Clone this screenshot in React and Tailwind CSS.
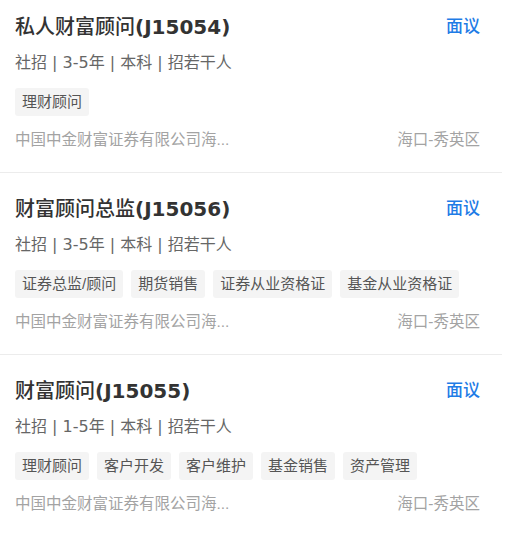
import React from 'react';

const jobs = [
  {
    name: '私人财富顾问',
    code: '(J15054)',
    meta: '社招 | 3-5年 | 本科 | 招若干人',
    tags: ['理财顾问'],
  },
  {
    name: '财富顾问总监',
    code: '(J15056)',
    meta: '社招 | 3-5年 | 本科 | 招若干人',
    tags: ['证券总监/顾问', '期货销售', '证券从业资格证', '基金从业资格证'],
  },
  {
    name: '财富顾问',
    code: '(J15055)',
    meta: '社招 | 1-5年 | 本科 | 招若干人',
    tags: ['理财顾问', '客户开发', '客户维护', '基金销售', '资产管理'],
  },
];

const font = { fontFamily: '"Liberation Sans", "Noto Sans CJK SC", sans-serif' };

const JobCard = ({ job, first, last }) => {
  return (
    <div
      className={`pl-[15px] pr-[22px] pb-[22px] ${first ? 'pt-[15px]' : 'pt-[24px]'} ${
        last ? '' : 'border-b border-[#ececec]'
      }`}
    >
      {/* Title row */}
      <div className="flex items-center justify-between h-[24px]">
        <div className="font-['DejaVu_Sans','Noto_Sans_CJK_SC',sans-serif] text-[20px] leading-[24px] font-medium text-[#333]">
          {job.name}
          <span className="font-semibold">{job.code}</span>
        </div>
        <div className="text-[17px] leading-[24px] font-medium text-[#1f7ce6]">面议</div>
      </div>

      {/* Meta */}
      <div className="mt-[13px] font-['DejaVu_Sans','Noto_Sans_CJK_SC',sans-serif] text-[16px] leading-[22px] text-[#666]">
        {job.meta}
      </div>

      {/* Tags */}
      <div className="mt-[14px] flex flex-wrap gap-2">
        {job.tags.map((t) => (
          <span
            key={t}
            className="h-[28px] px-[7px] flex items-center rounded-[3px] bg-[#f4f4f4] text-[15px] text-[#555]"
          >
            {t}
          </span>
        ))}
      </div>

      {/* Company + location */}
      <div className="mt-[14px] flex items-center justify-between text-[15.5px] leading-[20px] text-[#a3a3a3]">
        <span>中国中金财富证券有限公司海...</span>
        <span>海口-秀英区</span>
      </div>
    </div>
  );
};

const App = () => {
  return (
    <div className="w-[507px] min-h-[533px] bg-white" style={font}>
      <div className="w-[502px]">
        {jobs.map((job, i) => (
          <JobCard key={job.code} job={job} first={i === 0} last={i === jobs.length - 1} />
        ))}
      </div>
    </div>
  );
};

export default App;
